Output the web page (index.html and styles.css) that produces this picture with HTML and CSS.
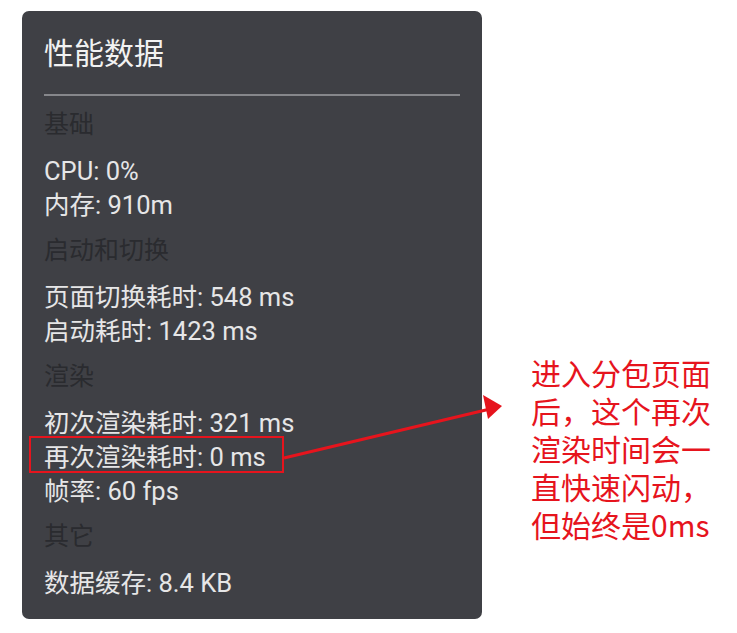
FILE: index.html
```html
<!DOCTYPE html>
<html lang="zh-CN">
<head>
<meta charset="utf-8">
<title>性能数据</title>
<link rel="stylesheet" href="styles.css">
</head>
<body>
<div class="page">
  <section class="panel">
    <h1 class="title">性能数据</h1>
    <div class="divider"></div>
    <div class="group">基础</div>
    <div class="item">CPU: 0%</div>
    <div class="item">内存: 910m</div>
    <div class="group">启动和切换</div>
    <div class="item">页面切换耗时: 548 ms</div>
    <div class="item">启动耗时: 1423 ms</div>
    <div class="group">渲染</div>
    <div class="item">初次渲染耗时: 321 ms</div>
    <div class="item marked">再次渲染耗时: 0 ms</div>
    <div class="item">帧率: 60 fps</div>
    <div class="group">其它</div>
    <div class="item">数据缓存: 8.4 KB</div>
  </section>
  <div class="note">
    <span class="note-line">进入分包页面</span>
    <span class="note-line">后，这个再次</span>
    <span class="note-line">渲染时间会一</span>
    <span class="note-line">直快速闪动，</span>
    <span class="note-line">但始终是0ms</span>
  </div>
</div>
<svg class="arrow" width="737" height="633" viewBox="0 0 737 633" xmlns="http://www.w3.org/2000/svg">
  <line x1="284" y1="458" x2="490" y2="409" stroke="#e6141d" stroke-width="3"/>
  <polygon points="483,395 502,406 488,419" fill="#e6141d"/>
</svg>
</body>
</html>
```
FILE: styles.css
```css
html, body {
  margin: 0;
  padding: 0;
  background: #ffffff;
}
body {
  position: relative;
  width: 737px;
  height: 633px;
  overflow: hidden;
}
.page {
  display: flex;
  align-items: flex-start;
  padding: 11px 0 0 22px;
}
.panel {
  width: 460px;
  box-sizing: border-box;
  background: #3f4045;
  border-radius: 7px;
  padding: 22px 22px 19px 22px;
  font-family: Roboto, "Noto Sans CJK SC", sans-serif;
}
.title {
  margin: 0;
  font-size: 30px;
  font-weight: 400;
  line-height: 42px;
  color: #f2f2f2;
}
.divider {
  margin-top: 19px;
  height: 2px;
  background: #86878b;
}
.group {
  font-size: 25px;
  line-height: 58px;
  color: #2a2b2f;
}
.item {
  font-size: 25.5px;
  line-height: 34px;
  height: 34px;
  white-space: nowrap;
  color: #e6e6e7;
}
.marked {
  position: relative;
}
.marked::after {
  content: "";
  position: absolute;
  left: -15px;
  top: -4px;
  width: 255px;
  height: 37px;
  box-sizing: border-box;
  border: 2px solid #e6141d;
}
.note {
  display: flex;
  flex-direction: column;
  margin: 342px 0 0 49px;
  font-family: "Noto Sans CJK SC", sans-serif;
  font-size: 30px;
  color: #e6141d;
  white-space: nowrap;
}
.note-line {
  display: block;
  line-height: 38px;
}
.arrow {
  position: absolute;
  left: 0;
  top: 0;
  pointer-events: none;
}
```
